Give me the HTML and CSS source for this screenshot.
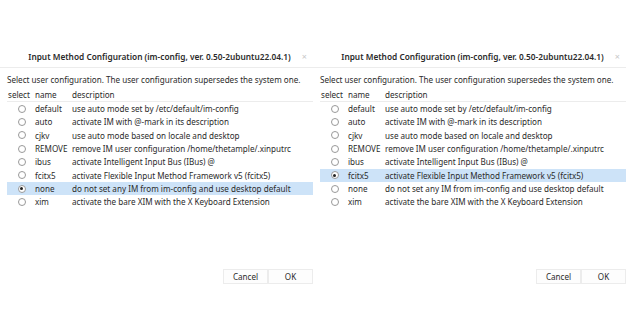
FILE: index.html
```html
<!DOCTYPE html>
<html lang="en">
<head>
  <meta charset="UTF-8" />
  <title>Input Method Configuration</title>
  <link rel="stylesheet" href="styles.css">
</head>
<body>
  <div class="screen">
    <!-- dialog with "none" selected -->
    <div class="dialog">
      <div class="titlebar">
        <span class="title">Input Method Configuration (im-config, ver. 0.50-2ubuntu22.04.1)</span>
        <span class="close">×</span>
      </div>
      <div class="content">
        <div class="intro">Select user configuration. The user configuration supersedes the system one.</div>
        <div class="list">
          <div class="row head"><span class="c-sel">select</span><span class="c-name">name</span><span>description</span></div>
          <div class="row"><span class="c-sel"><i class="radio"></i></span><span class="c-name">default</span><span>use auto mode set by /etc/default/im-config</span></div>
          <div class="row"><span class="c-sel"><i class="radio"></i></span><span class="c-name">auto</span><span>activate IM with @-mark in its description</span></div>
          <div class="row"><span class="c-sel"><i class="radio"></i></span><span class="c-name">cjkv</span><span>use auto mode based on locale and desktop</span></div>
          <div class="row"><span class="c-sel"><i class="radio"></i></span><span class="c-name">REMOVE</span><span>remove IM user configuration /home/thetample/.xinputrc</span></div>
          <div class="row"><span class="c-sel"><i class="radio"></i></span><span class="c-name">ibus</span><span>activate Intelligent Input Bus (IBus) @</span></div>
          <div class="row"><span class="c-sel"><i class="radio"></i></span><span class="c-name">fcitx5</span><span>activate Flexible Input Method Framework v5 (fcitx5)</span></div>
          <div class="row active"><span class="c-sel"><i class="radio on"></i></span><span class="c-name">none</span><span>do not set any IM from im-config and use desktop default</span></div>
          <div class="row"><span class="c-sel"><i class="radio"></i></span><span class="c-name">xim</span><span>activate the bare XIM with the X Keyboard Extension</span></div>
        </div>
        <div class="buttons">
          <button class="btn">Cancel</button>
          <button class="btn">OK</button>
        </div>
      </div>
    </div>

    <!-- dialog with "fcitx5" selected -->
    <div class="dialog">
      <div class="titlebar">
        <span class="title">Input Method Configuration (im-config, ver. 0.50-2ubuntu22.04.1)</span>
        <span class="close">×</span>
      </div>
      <div class="content">
        <div class="intro">Select user configuration. The user configuration supersedes the system one.</div>
        <div class="list">
          <div class="row head"><span class="c-sel">select</span><span class="c-name">name</span><span>description</span></div>
          <div class="row"><span class="c-sel"><i class="radio"></i></span><span class="c-name">default</span><span>use auto mode set by /etc/default/im-config</span></div>
          <div class="row"><span class="c-sel"><i class="radio"></i></span><span class="c-name">auto</span><span>activate IM with @-mark in its description</span></div>
          <div class="row"><span class="c-sel"><i class="radio"></i></span><span class="c-name">cjkv</span><span>use auto mode based on locale and desktop</span></div>
          <div class="row"><span class="c-sel"><i class="radio"></i></span><span class="c-name">REMOVE</span><span>remove IM user configuration /home/thetample/.xinputrc</span></div>
          <div class="row"><span class="c-sel"><i class="radio"></i></span><span class="c-name">ibus</span><span>activate Intelligent Input Bus (IBus) @</span></div>
          <div class="row active"><span class="c-sel"><i class="radio on"></i></span><span class="c-name">fcitx5</span><span>activate Flexible Input Method Framework v5 (fcitx5)</span></div>
          <div class="row"><span class="c-sel"><i class="radio"></i></span><span class="c-name">none</span><span>do not set any IM from im-config and use desktop default</span></div>
          <div class="row"><span class="c-sel"><i class="radio"></i></span><span class="c-name">xim</span><span>activate the bare XIM with the X Keyboard Extension</span></div>
        </div>
        <div class="buttons">
          <button class="btn">Cancel</button>
          <button class="btn">OK</button>
        </div>
      </div>
    </div>
  </div>
</body>
</html>
```

FILE: styles.css
```css
body, html {
  margin: 0;
  padding: 0;
  background: #fff;
  color: #2b2b2b;
  font-family: 'Noto Sans', 'DejaVu Sans', sans-serif;
  font-size: 8.1px;
}

.screen {
  display: flex;
  padding-top: 45px;
}

.dialog {
  width: 313px;
  flex: none;
}

.titlebar {
  height: 22px;
  display: flex;
  align-items: center;
  justify-content: center;
  position: relative;
  border-bottom: 1px solid #ececec;
}

.title {
  font-weight: 600;
  font-size: 8.3px;
  padding-left: 6px;
}

.close {
  position: absolute;
  right: 6px;
  top: 5px;
  color: #c8c8c8;
  font-size: 9px;
}

.content {
  padding: 0 0 0 7px;
}

.intro {
  margin-top: 5px;
  line-height: 13px;
}

.list {
  margin-top: 1px;
  width: 306px;
}

.row {
  display: flex;
  align-items: center;
  height: 13.33px;
  white-space: nowrap;
}

.row.head {
  height: 14px;
  border-bottom: 1px solid #ececec;
}

.row.active {
  background: #cde3f8;
}

.c-sel {
  width: 28px;
  padding-left: 1px;
  box-sizing: border-box;
  display: flex;
  justify-content: center;
}

.row.head .c-sel {
  justify-content: flex-start;
}

.c-name {
  width: 37px;
}

.radio {
  display: block;
  width: 8px;
  height: 8px;
  border: 1px solid #999;
  border-radius: 50%;
  box-sizing: border-box;
  background: #fff;
  position: relative;
}

.radio.on::after {
  content: '';
  position: absolute;
  left: 1.5px;
  top: 1.5px;
  width: 3px;
  height: 3px;
  border-radius: 50%;
  background: #222;
}

.buttons {
  display: flex;
  justify-content: flex-end;
  margin-top: 60px;
}

.btn {
  font-family: inherit;
  font-size: 8.1px;
  color: #2b2b2b;
  background: #fdfdfd;
  border: 1px solid #ececec;
  height: 15px;
  width: 45px;
  padding: 0;
  margin: 0;
}
```
